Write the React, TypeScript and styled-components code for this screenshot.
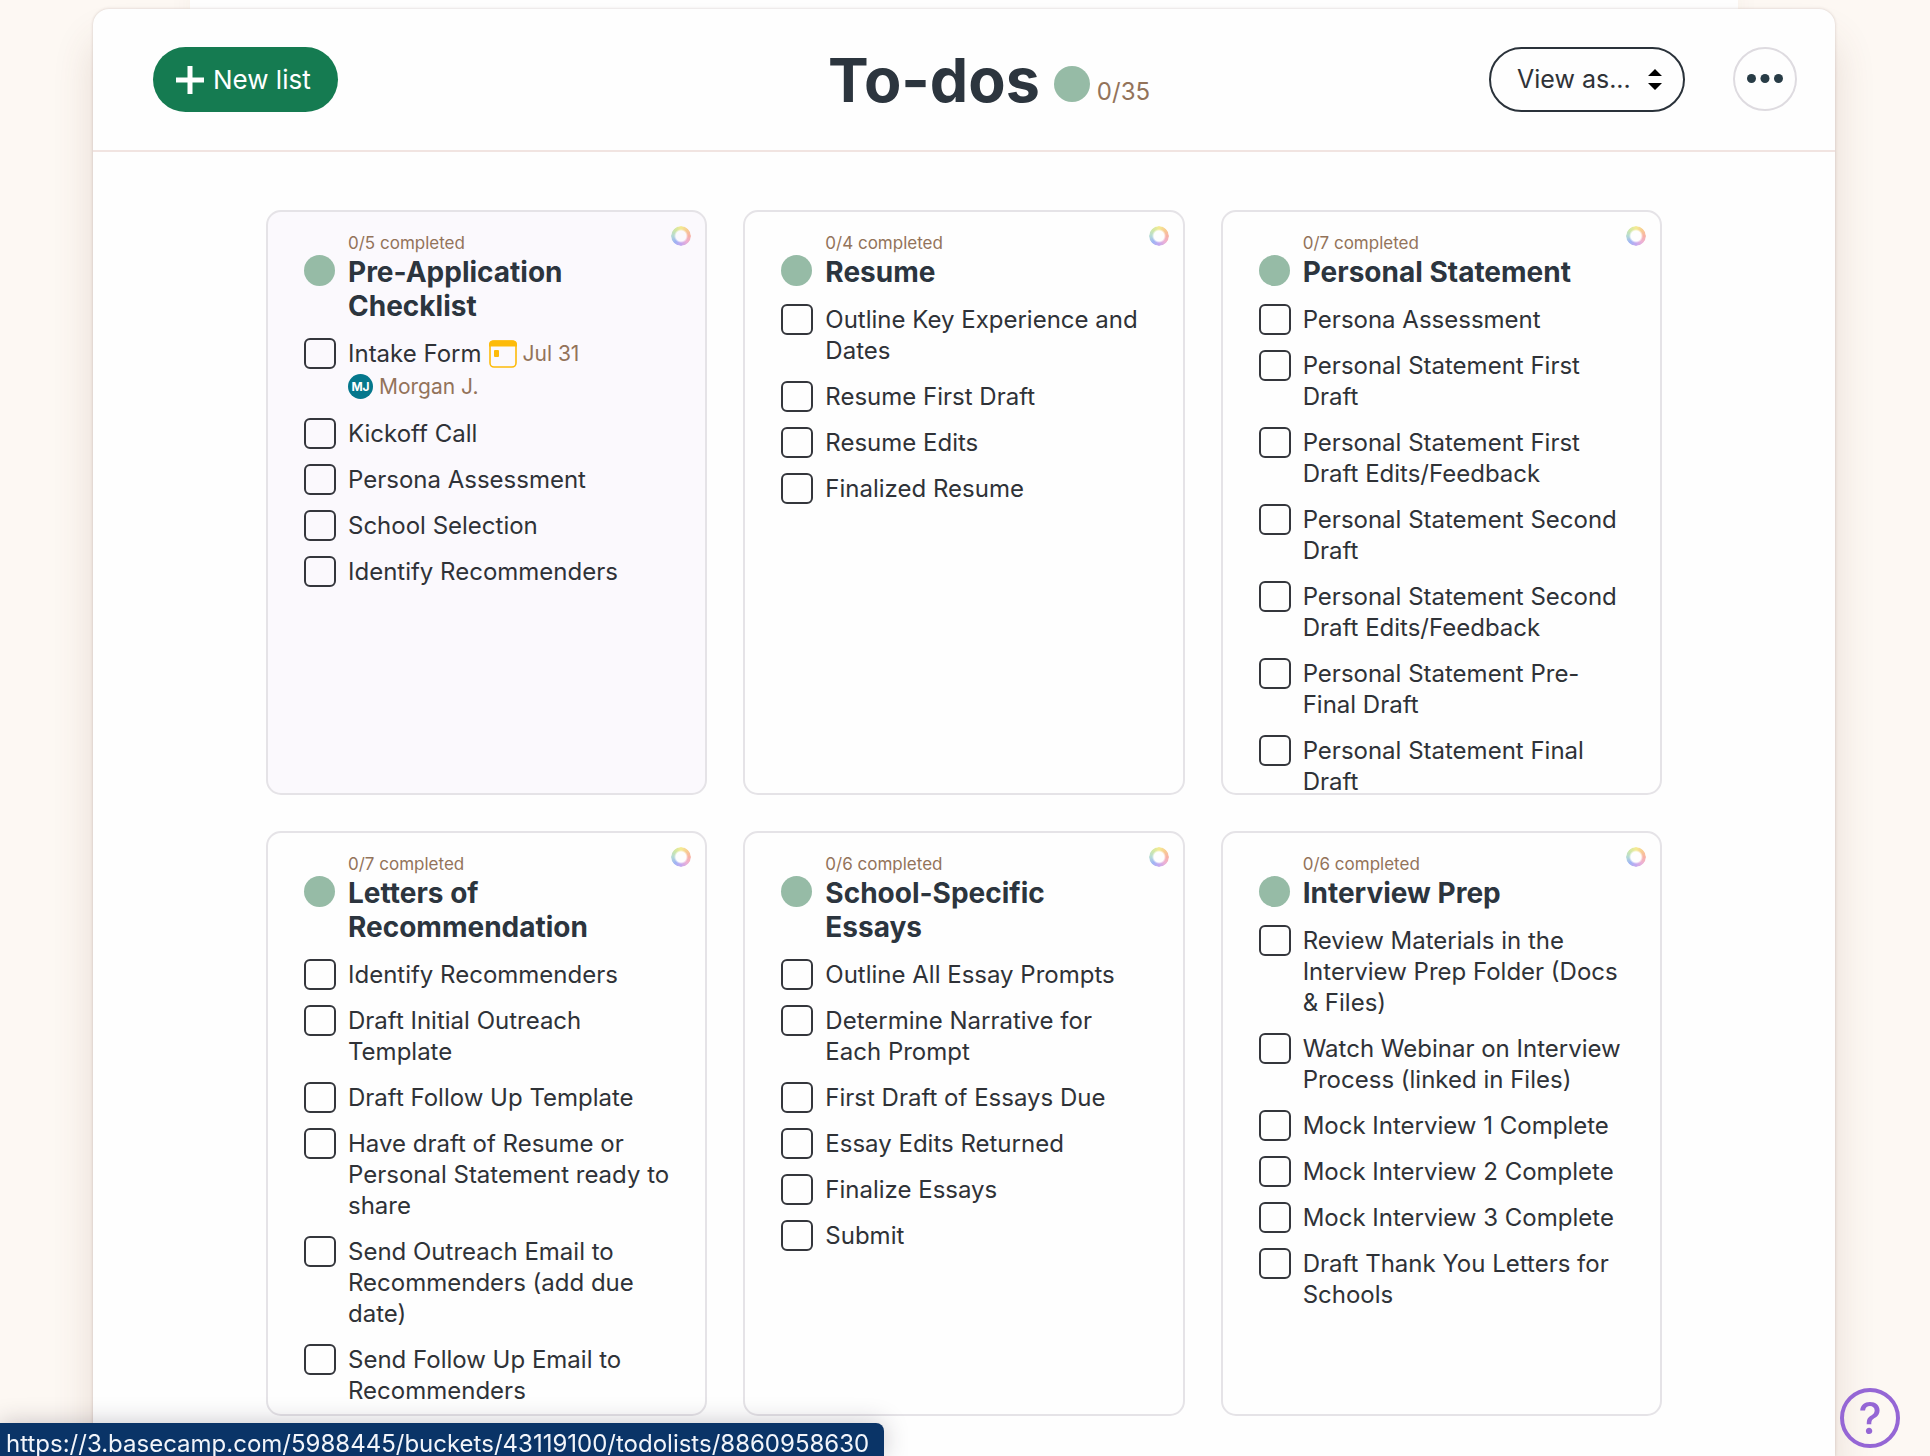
import React from "react";
import styled, { createGlobalStyle } from "styled-components";

const color = {
  page: "#fdf8f3",
  sheet: "#fefefe",
  ink: "#2f3237",
  heading: "#2c353e",
  brown: "#93735a",
  green: "#157b51",
  dot: "#96bba6",
  line: "#e5e3e7",
};

const GlobalStyle = createGlobalStyle`
  *, *::before, *::after { box-sizing: border-box; }
  html { background: ${color.page}; }
  body {
    margin: 0;
    color: ${color.ink};
    font-family: Inter, "Liberation Sans", sans-serif;
    font-size: 24px;
    line-height: 31px;
  }
  button, select, input { font: inherit; color: inherit; margin: 0; }
  a { color: inherit; text-decoration: none; }
`;

const Page = styled.div`
  display: flex;
  flex-direction: column;
  min-height: 100vh;
  padding: 0 95px 0 93px;
  overflow: hidden;
`;

const BackSheet = styled.div`
  height: 9px;
  margin: 0 97px;
  background: ${color.sheet};
  box-shadow: 0 0 24px rgba(110, 70, 50, 0.14);
`;

const Panel = styled.main`
  flex: 1;
  background: ${color.sheet};
  border-radius: 16px 16px 0 0;
  box-shadow: 0 0 3px rgba(90, 60, 50, 0.24), 0 32px 40px rgba(110, 70, 50, 0.16);
`;

const Toolbar = styled.header`
  display: grid;
  grid-template-columns: 1fr auto 1fr;
  align-items: center;
  padding: 38px 38px 38px 60px;
  border-bottom: 2px solid #f1e4e1;
`;

const NewListButton = styled.button`
  justify-self: start;
  display: flex;
  align-items: center;
  gap: 9px;
  height: 65px;
  padding: 0 27px 0 23px;
  border: 0;
  border-radius: 33px;
  background: ${color.green};
  color: #fff;
  font-size: 26px;
`;

const TitleGroup = styled.div`
  display: flex;
  align-items: baseline;
  gap: 14px;
  padding-left: 28px;
`;

const Title = styled.h1`
  margin: 0;
  color: ${color.heading};
  font-size: 61px;
  font-weight: 700;
  line-height: 64px;
`;

const Dot = styled.span<{ $size: number }>`
  display: inline-block;
  width: ${(p) => p.$size}px;
  height: ${(p) => p.$size}px;
  border-radius: 50%;
  background: ${color.dot};
`;

const TitleProgress = styled.div`
  display: flex;
  align-items: flex-end;
  gap: 7px;
`;

const TitleCount = styled.span`
  color: ${color.brown};
  line-height: 20px;
`;

const Actions = styled.div`
  justify-self: end;
  display: flex;
  align-items: flex-start;
  gap: 48px;
`;

const SelectWrap = styled.div`
  display: grid;
  align-items: center;
  > * { grid-area: 1 / 1; }
  svg { justify-self: end; margin-right: 23px; pointer-events: none; }
`;

const ViewSelect = styled.select`
  appearance: none;
  width: 196px;
  height: 65px;
  padding: 0 50px 0 26px;
  border: 2px solid #2a323a;
  border-radius: 33px;
  background: transparent;
  font-size: 25px;
`;

const MoreButton = styled.button`
  display: grid;
  place-items: center;
  width: 64px;
  height: 64px;
  padding: 0;
  border: 2px solid #dedbe0;
  border-radius: 50%;
  background: transparent;
`;

const Board = styled.div`
  display: grid;
  grid-template-columns: repeat(3, minmax(0, 1fr));
  grid-auto-rows: 585px;
  gap: 36px;
  padding: 58px 173px 40px;
`;

const Card = styled.section<{ $active?: boolean }>`
  position: relative;
  overflow: hidden;
  padding: 21px 34px 0 36px;
  border: 2px solid ${color.line};
  border-radius: 15px;
  background: ${(p) => (p.$active ? "#fbf9fd" : "transparent")};
`;

const ColorButton = styled.button`
  position: absolute;
  top: 14px;
  right: 14px;
  width: 20px;
  height: 20px;
  padding: 0;
  border: 0;
  border-radius: 50%;
  opacity: 0.65;
  background: conic-gradient(#f0e25a, #f5b45a, #f58a78, #e58ac0, #a77be8, #6f8ff0, #8fc9c0, #b8dc7a, #f0e25a);
  mask: radial-gradient(circle, transparent 5px, #000 7px);
`;

const CardHead = styled.div`
  display: grid;
  grid-template-columns: 32px 1fr;
  column-gap: 12px;
  margin-bottom: 15px;
`;

const Progress = styled.a`
  grid-column: 2;
  margin-bottom: 2px;
  color: ${color.brown};
  font-size: 17px;
  line-height: 20px;
`;

const CardTitle = styled.h2`
  margin: 0;
  padding-right: 12px;
  color: ${color.heading};
  font-size: 28px;
  font-weight: 700;
  line-height: 34px;
`;

const TodoList = styled.ul`
  display: grid;
  gap: 15px;
  margin: 0;
  padding: 0;
  list-style: none;
`;

const Todo = styled.li`
  display: grid;
  grid-template-columns: 32px 1fr;
  column-gap: 12px;
  align-items: start;
`;

const Check = styled.input`
  appearance: none;
  width: 32px;
  height: 31px;
  border: 2px solid #34363c;
  border-radius: 6px;
`;

const TodoLine = styled.div`
  display: flex;
  flex-wrap: wrap;
  align-items: center;
`;

const Due = styled.span`
  display: inline-flex;
  align-items: center;
  gap: 6px;
  margin-left: 7px;
  color: ${color.brown};
  font-size: 21px;
`;

const Assignee = styled.div`
  display: flex;
  align-items: center;
  gap: 6px;
  height: 34px;
  color: ${color.brown};
  font-size: 21px;
`;

const Avatar = styled.span`
  display: grid;
  place-items: center;
  width: 25px;
  height: 25px;
  border-radius: 50%;
  background: #04778c;
  color: #fff;
  font-size: 12px;
  font-weight: 700;
  line-height: 25px;
`;

const LinkStatus = styled.div`
  position: fixed;
  left: 0;
  bottom: 0;
  height: 33px;
  padding: 4px 15px 0 6px;
  border-radius: 0 8px 0 0;
  background: #0a3467;
  box-shadow: 0 0 24px rgba(40, 30, 50, 0.25);
  color: #f2f5fa;
  line-height: 34px;
`;

const HelpButton = styled.button`
  position: fixed;
  right: 30px;
  bottom: 8px;
  width: 60px;
  height: 60px;
  padding: 0;
  border: 4px solid #9566d5;
  border-radius: 50%;
  background: transparent;
  color: #9566d5;
  font-size: 44px;
  font-weight: 500;
  line-height: 52px;
`;

type Item = { text: string; due?: string; who?: string; initials?: string };
type List = { title: string; total: number; items: Item[] };

const t = (...names: string[]): Item[] => names.map((text) => ({ text }));

const lists: List[] = [
  {
    title: "Pre-Application Checklist",
    total: 5,
    items: [
      { text: "Intake Form", due: "Jul 31", who: "Morgan J.", initials: "MJ" },
      ...t("Kickoff Call", "Persona Assessment", "School Selection", "Identify Recommenders"),
    ],
  },
  {
    title: "Resume",
    total: 4,
    items: t("Outline Key Experience and Dates", "Resume First Draft", "Resume Edits", "Finalized Resume"),
  },
  {
    title: "Personal Statement",
    total: 7,
    items: t(
      "Persona Assessment",
      "Personal Statement First Draft",
      "Personal Statement First Draft Edits/Feedback",
      "Personal Statement Second Draft",
      "Personal Statement Second Draft Edits/Feedback",
      "Personal Statement Pre-Final Draft",
      "Personal Statement Final Draft"
    ),
  },
  {
    title: "Letters of Recommendation",
    total: 7,
    items: t(
      "Identify Recommenders",
      "Draft Initial Outreach Template",
      "Draft Follow Up Template",
      "Have draft of Resume or Personal Statement ready to share",
      "Send Outreach Email to Recommenders (add due date)",
      "Send Follow Up Email to Recommenders"
    ),
  },
  {
    title: "School-Specific Essays",
    total: 6,
    items: t(
      "Outline All Essay Prompts",
      "Determine Narrative for Each Prompt",
      "First Draft of Essays Due",
      "Essay Edits Returned",
      "Finalize Essays",
      "Submit"
    ),
  },
  {
    title: "Interview Prep",
    total: 6,
    items: t(
      "Review Materials in the Interview Prep Folder (Docs & Files)",
      "Watch Webinar on Interview Process (linked in Files)",
      "Mock Interview 1 Complete",
      "Mock Interview 2 Complete",
      "Mock Interview 3 Complete",
      "Draft Thank You Letters for Schools"
    ),
  },
];

const PlusIcon = () => (
  <svg width="28" height="28" viewBox="0 0 28 28" aria-hidden="true">
    <path d="M14 0v28M0 14h28" stroke="#fff" strokeWidth="5" />
  </svg>
);

const SortIcon = () => (
  <svg width="14" height="21" viewBox="0 0 14 21" aria-hidden="true">
    <path d="M7 0l7 7H0zM7 21l7-7H0z" fill="#000" />
  </svg>
);

const DotsIcon = () => (
  <svg width="36" height="10" viewBox="0 0 36 10" aria-hidden="true" fill="#283c46">
    <circle cx="4.5" cy="4.5" r="4.5" />
    <circle cx="18" cy="4.5" r="4.5" />
    <circle cx="31.5" cy="4.5" r="4.5" />
  </svg>
);

const CalendarIcon = () => (
  <svg width="28" height="28" viewBox="0 0 28 28" aria-hidden="true">
    <rect x="1" y="1" width="26" height="26" rx="4" fill="none" stroke="#fdbb0a" strokeWidth="1.6" />
    <path d="M0 6.5v-2a4 4 0 0 1 4-4h20a4 4 0 0 1 4 4v2z" fill="#fdbb0a" />
    <rect x="5" y="10" width="5" height="7" rx="1" fill="#fdbb0a" />
  </svg>
);

function TodoCard({ list, active, index }: { list: List; active: boolean; index: number }) {
  return (
    <Card $active={active}>
      <ColorButton type="button" aria-label={`Change color of ${list.title}`} />
      <CardHead>
        <Progress href="#completed">0/{list.total} completed</Progress>
        <Dot $size={31} />
        <CardTitle>
          <a href="#list">{list.title}</a>
        </CardTitle>
      </CardHead>
      <TodoList>
        {list.items.map((item, i) => {
          const id = `todo-${index}-${i}`;
          return (
            <Todo key={id}>
              <Check type="checkbox" id={id} />
              <div>
                <TodoLine>
                  <label htmlFor={id}>{item.text}</label>
                  {item.due && (
                    <Due>
                      <CalendarIcon />
                      {item.due}
                    </Due>
                  )}
                </TodoLine>
                {item.who && (
                  <Assignee>
                    <Avatar>{item.initials}</Avatar>
                    {item.who}
                  </Assignee>
                )}
              </div>
            </Todo>
          );
        })}
      </TodoList>
    </Card>
  );
}

export default function App() {
  return (
    <>
      <GlobalStyle />
      <Page>
        <BackSheet />
        <Panel>
          <Toolbar>
            <NewListButton type="button">
              <PlusIcon />
              New list
            </NewListButton>
            <TitleGroup>
              <Title>To-dos</Title>
              <TitleProgress>
                <Dot $size={36} />
                <TitleCount>0/35</TitleCount>
              </TitleProgress>
            </TitleGroup>
            <Actions>
              <SelectWrap>
                <ViewSelect aria-label="View as">
                  <option>View as...</option>
                </ViewSelect>
                <SortIcon />
              </SelectWrap>
              <MoreButton type="button" aria-label="More options">
                <DotsIcon />
              </MoreButton>
            </Actions>
          </Toolbar>
          <Board>
            {lists.map((list, i) => (
              <TodoCard key={list.title} list={list} index={i} active={i === 0} />
            ))}
          </Board>
        </Panel>
      </Page>
      <LinkStatus>https://3.basecamp.com/5988445/buckets/43119100/todolists/8860958630</LinkStatus>
      <HelpButton type="button" aria-label="Help">?</HelpButton>
    </>
  );
}
